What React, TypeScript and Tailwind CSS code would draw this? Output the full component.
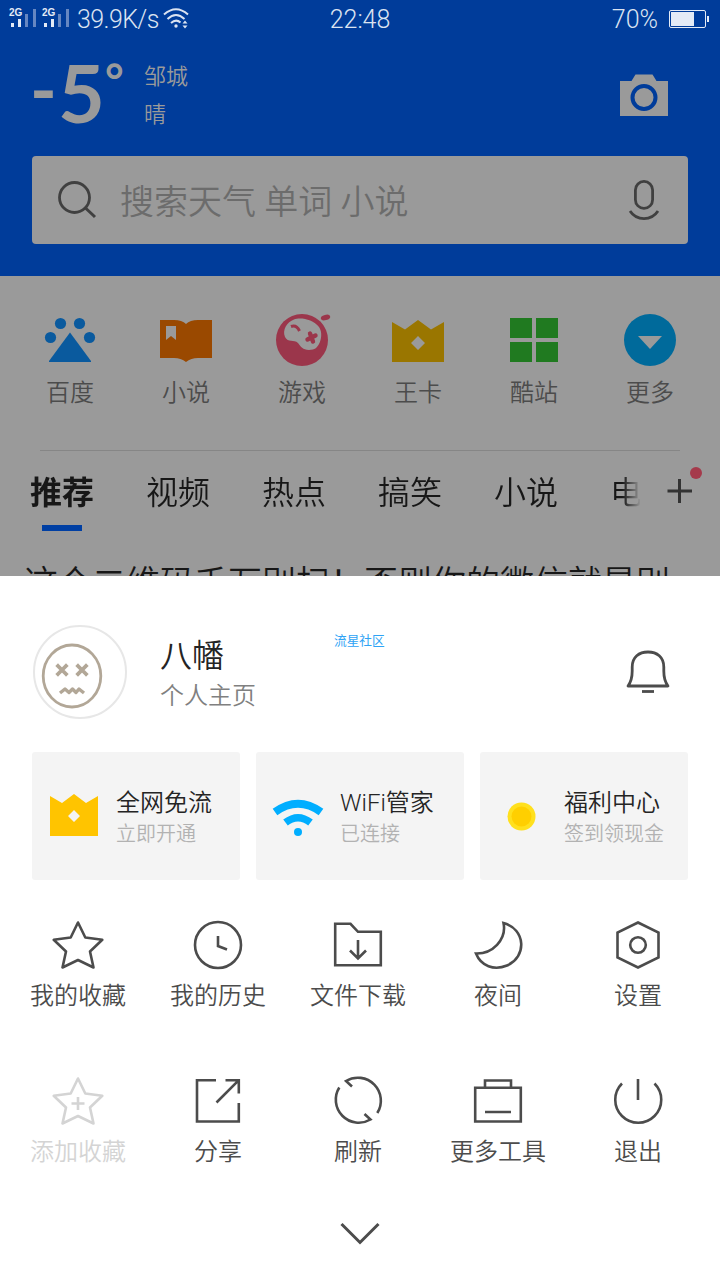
import type { ReactNode } from "react";

const tabs = ["视频", "热点", "搞笑", "小说"];

const STAR = "M24 1.5 L31.3 16.5 L48.3 18.8 L36 30.5 L39.5 46.5 L24 39 L8.5 46.5 L12 30.5 L-0.3 18.8 L16.7 16.5 Z";

function Icon({
  children,
  className = "",
  size = 52,
}: {
  children: ReactNode;
  className?: string;
  size?: number;
}) {
  return (
    <svg
      className={`block shrink-0 ${className}`}
      width={size}
      height={size}
      viewBox={`0 0 ${size} ${size}`}
      fill="none"
    >
      {children}
    </svg>
  );
}

function Signal() {
  return (
    <svg className="block shrink-0 overflow-visible" width="28" height="20" viewBox="0 0 28 20">
      <text x="0" y="7" fontSize="10" fontWeight="700" fontFamily="Liberation Sans, sans-serif" fill="#e4ebf6">
        2G
      </text>
      <path d="M2 14h3v4H2zM9 10h3v8H9z" fill="#e4ebf6" />
      <path d="M16 5h3v13h-3zM24 0h3v18h-3z" fill="#6687c2" />
    </svg>
  );
}

function StatusBar() {
  return (
    <div className="grid h-[38px] grid-cols-3 items-center text-[25px] font-light leading-none text-[#dbe3f1]">
      <div className="flex items-center pl-[9px]">
        <Signal />
        <span className="w-[5px]" />
        <Signal />
        <span className="ml-[7px] w-[85px] whitespace-nowrap tracking-[-0.6px]">39.9K/s</span>
        <svg className="block shrink-0" width="28" height="22" viewBox="0 0 28 22" fill="none" stroke="#dbe3f1" strokeWidth="2">
          <path d="M2 6.5 Q14 -4 26 6.5M5.5 11 Q14 3 22.5 11M9 15 Q14 10.5 18.5 14.5" />
          <circle cx="14" cy="18" r="1.7" fill="#dbe3f1" stroke="none" />
          <path d="M20.5 15.5 L23 12.5 L25.5 15.5 ZM20.5 17.5 L23 20.5 L25.5 17.5 Z" fill="#dbe3f1" stroke="none" />
        </svg>
      </div>
      <span className="text-center">22:48</span>
      <div className="flex items-center justify-end pr-[11px]">
        <span>70%</span>
        <svg className="ml-[11px] block" width="40" height="18" viewBox="0 0 40 18">
          <rect x="0.5" y="0.5" width="36" height="17" rx="1.5" fill="none" stroke="#e4ebf6" />
          <path d="M2 2h23v14H2zM38 6h2v6h-2z" fill="#e4ebf6" />
        </svg>
      </div>
    </div>
  );
}

function Weather() {
  return (
    <div className="flex h-[118px] justify-between pl-[30px] pr-[52px] text-[#9a9a9a]">
      <div className="flex">
        <div className="flex w-[114px] items-start pt-[13px] font-['Lato',sans-serif] text-[81px] font-bold leading-[82px]">
          <span className="w-[28px] text-[72px] leading-[74px]">-</span>
          <span className="w-[47px]">5</span>
          <span className="text-[45px] leading-[58px]">°</span>
        </div>
        <div className="pt-[20px] text-[22px] leading-[38px]">
          <p>邹城</p>
          <p>晴</p>
        </div>
      </div>
      <svg className="mt-[36px] block" width="48" height="42" viewBox="0 0 48 42">
        <path d="M0 7H11.5L15.5 0.5H32.5L36.5 7H48V42H0Z" fill="#9a9a9a" />
        <circle cx="24" cy="23.5" r="11.5" fill="none" stroke="#003c9a" strokeWidth="4" />
      </svg>
    </div>
  );
}

function SearchBar() {
  return (
    <div className="mx-[32px] flex h-[88px] items-center rounded-[4px] bg-[#9a9a9a]">
      <Icon size={40} className="ml-[25px]">
        <circle cx="17.5" cy="17.5" r="15" stroke="#404040" strokeWidth="2.8" />
        <path d="M28.5 28 L38 37" stroke="#404040" strokeWidth="3" />
      </Icon>
      <span className="ml-[23px] flex-1 pt-[3px] text-[34px] leading-[48px] text-[#6c6c6c]">搜索天气 单词 小说</span>
      <svg className="mr-[28px] block" width="32" height="42" viewBox="0 0 32 42" fill="none" stroke="#404040" strokeWidth="2.8">
        <rect x="7.4" y="2.4" width="17.2" height="27" rx="8.6" />
        <path d="M2 32 Q7 39.6 16 39.6 T30 32" />
      </svg>
    </div>
  );
}

const shortcuts: { label: string; icon: ReactNode }[] = [
  {
    label: "百度",
    icon: (
      <g fill="#0a5a9e">
        <circle cx="16.5" cy="9.5" r="5.6" />
        <circle cx="35.5" cy="9.5" r="5.6" />
        <circle cx="6.5" cy="23.5" r="5.6" />
        <circle cx="45.5" cy="23.5" r="5.6" />
        <path d="M26 18.5 L47 47 V48 H5 V47 Z" />
      </g>
    ),
  },
  {
    label: "小说",
    icon: (
      <>
        <path d="M0 6H14Q22 6 26 10Q30 6 38 6H52V44H38Q31 44 26 48Q21 44 14 44H0Z" fill="#9a4900" />
        <path d="M6 12H16V26L11 22L6 26Z" fill="#9a9a9a" />
      </>
    ),
  },
  {
    label: "游戏",
    icon: (
      <>
        <circle cx="26" cy="26" r="26" fill="#9b364b" />
        <path
          d="M18 5.5C24 3 37 5 43 13C48 20 44 34 37 35.5C28 37.5 25 33 22 29C18 25 12 29 9 23C6 16 11 8 18 5.5Z"
          fill="#9a9a9a"
        />
        <path d="M15 12.5Q20.5 10.5 23.5 17" stroke="#9b364b" strokeWidth="3" />
        <path d="M34 19.5L37 27.5M31.5 25.5L39.5 21.5" stroke="#9b364b" strokeWidth="4.4" strokeLinecap="round" />
        <ellipse cx="49.5" cy="3.5" rx="4.8" ry="2.7" fill="#9b364b" transform="rotate(-15 49.5 3.5)" />
      </>
    ),
  },
  {
    label: "王卡",
    icon: (
      <path fillRule="evenodd" fill="#9a7600" d="M0 8L13 15.5L26 6L39 15.5L52 8V48H0ZM26 22L19 29L26 36L33 29Z" />
    ),
  },
  {
    label: "酷站",
    icon: <path d="M2 4h22v20H2zM28 4h22v20H28zM2 28h22v20H2zM28 28h22v20H28z" fill="#207a20" />,
  },
  {
    label: "更多",
    icon: (
      <>
        <circle cx="26" cy="26" r="26" fill="#006a9b" />
        <path d="M14 22H38L26 35Z" fill="#9a9a9a" />
      </>
    ),
  },
];

function Shortcuts() {
  return (
    <div className="flex h-[174px] justify-between px-[12px] pt-[38px]">
      {shortcuts.map((item) => (
        <div key={item.label} className="flex w-[116px] flex-col items-center">
          <Icon className="overflow-visible">{item.icon}</Icon>
          <span className="mt-[10px] text-[24px] leading-[34px] text-[#4c4c4c]">{item.label}</span>
        </div>
      ))}
    </div>
  );
}

function Channels() {
  return (
    <>
      <div className="mx-[40px] h-px bg-[#868686]" />
      <div className="flex h-[80px] pl-[30px] text-[32px] leading-[48px] text-[#171717]">
        <div className="flex w-[610px] gap-[52px] overflow-hidden whitespace-nowrap pt-[18px] [mask-image:linear-gradient(to_right,black_592px,transparent_611px)]">
          <div className="flex w-[64px] shrink-0 flex-col items-center font-bold">
            <span>推荐</span>
            <span className="mt-[8px] h-[6px] w-[40px] bg-[#003fa3]" />
          </div>
          {tabs.map((tab) => (
            <span key={tab} className="w-[64px] shrink-0">
              {tab}
            </span>
          ))}
          <span>电</span>
        </div>
        <svg className="ml-[26px] mt-[14px] block" width="38" height="40" viewBox="0 0 38 40">
          <path d="M1.5 26H26M13.5 14V38" stroke="#333" strokeWidth="3" />
          <circle cx="30" cy="8" r="6" fill="#a53a4b" />
        </svg>
      </div>
      <p className="h-[45px] overflow-hidden whitespace-nowrap pl-[24px] pt-[28px] text-[34px] leading-[48px] text-[#171717]">
        这个二维码千万别扫！否则你的微信就是别
      </p>
    </>
  );
}

function Profile() {
  return (
    <div className="flex h-[176px] pl-[32px] pr-[50px] pt-[48px]">
      <svg className="block shrink-0" width="96" height="96" viewBox="0 0 96 96" fill="none">
        <circle cx="48" cy="48" r="46" stroke="#e7e7e7" strokeWidth="2" />
        <g stroke="#b2a797">
          <ellipse cx="40" cy="52" rx="28.8" ry="31" strokeWidth="2.8" />
          <path d="M26 42L34 50M34 42L26 50M46 42L54 50M54 42L46 50" strokeWidth="3.8" strokeLinecap="square" />
          <path d="M28 69L33 65L37 68.5L40.5 65L44 68.5L47 65L52 69" strokeWidth="3.4" strokeLinejoin="round" />
        </g>
      </svg>
      <div className="ml-[32px] w-[174px] pt-[9px]">
        <p className="text-[32px] leading-[46px] text-[#242424]">八幡</p>
        <p className="text-[24px] leading-[34px] text-[#808080]">个人主页</p>
      </div>
      <span className="pt-[8px] text-[12.7px] font-normal leading-[18px] text-[#2ea3f5]">流星社区</span>
      <svg className="ml-auto mt-[25px] block" width="44" height="46" viewBox="0 0 44 46" fill="none" stroke="#4c4c4c" strokeWidth="2.8">
        <path d="M2 37C5 33 6.2 28 6.2 22V18C6.2 8 13 3 22 3S37.8 8 37.8 18V22C37.8 28 39 33 42 37Z" strokeLinejoin="round" />
        <path d="M16 42.5H28" />
      </svg>
    </div>
  );
}

const cards: { title: string; note: string; icon: ReactNode }[] = [
  {
    title: "全网免流",
    note: "立即开通",
    icon: (
      <path fillRule="evenodd" fill="#ffc400" d="M2 8L14 15L26 6L38 15L50 8V48H2ZM26 22L20 28L26 34L32 28Z" />
    ),
  },
  {
    title: "WiFi管家",
    note: "已连接",
    icon: (
      <>
        <path d="M3 24Q26 7.5 49 24" stroke="#00aeff" strokeWidth="8" />
        <path d="M13.5 34.5Q26 25 38.5 34.5" stroke="#00aeff" strokeWidth="7.5" />
        <circle cx="26" cy="44" r="4" fill="#00aeff" />
      </>
    ),
  },
  {
    title: "福利中心",
    note: "签到领现金",
    icon: (
      <>
        <circle cx="25.5" cy="28.5" r="14" fill="#ffe01d" />
        <circle cx="25.5" cy="28.5" r="10" fill="#ffcf00" />
      </>
    ),
  },
];

function Cards() {
  return (
    <div className="grid grid-cols-3 gap-4 px-8">
      {cards.map((card) => (
        <div key={card.title} className="flex h-32 rounded-[3px] bg-[#f4f4f4] pl-4">
          <Icon className="mt-[36px]">{card.icon}</Icon>
          <div className="ml-[16px] whitespace-nowrap pt-[34px]">
            <p className="text-[24px] leading-[34px] text-[#242424]">{card.title}</p>
            <p className="text-[20px] leading-[28px] text-[#b2b2b2]">{card.note}</p>
          </div>
        </div>
      ))}
    </div>
  );
}

const actions: { label: string; icon: ReactNode; disabled?: boolean }[] = [
  { label: "我的收藏", icon: <path d={STAR} strokeLinejoin="round" /> },
  {
    label: "我的历史",
    icon: (
      <>
        <circle cx="24" cy="24" r="23" />
        <path d="M24 15V25L33 28.5" />
      </>
    ),
  },
  {
    label: "文件下载",
    icon: (
      <>
        <path d="M1.2 2.8H16.5L24 10.8H46.8V44.3H1.2Z" />
        <path d="M24 19V37M16 29.5L24 37.5L32 29.5" />
      </>
    ),
  },
  { label: "夜间", icon: <path d="M29.5 2C52 8 53 36 33 44.5C20 50 7 45 2 32.5C18 33 33 19 29.5 2Z" /> },
  {
    label: "设置",
    icon: (
      <>
        <path d="M24 1.5L44.5 11.5V36.5L24 46.5L3.5 36.5V11.5Z" />
        <circle cx="24" cy="24" r="7.8" />
      </>
    ),
  },
  {
    label: "添加收藏",
    disabled: true,
    icon: (
      <>
        <path d={STAR} strokeLinejoin="round" />
        <path d="M24 20V33M17.5 26.5H30.5" />
      </>
    ),
  },
  {
    label: "分享",
    icon: <path d="M22 3.2H3V44.5H44.8V26M31.5 3.2H44.8V16.5M44.8 3.2L22.5 25.5" />,
  },
  {
    label: "刷新",
    icon: (
      <>
        <path d="M18 9.5L12 4A23 23 0 0 1 43.3 36" />
        <path d="M30.5 37L36.5 42.5A23 23 0 0 1 5.3 10.5" />
      </>
    ),
  },
  {
    label: "更多工具",
    icon: <path d="M1.2 10.8H46.8V44.5H1.2ZM11 10.8V3.5H37V10.8M11 35H37" />,
  },
  {
    label: "退出",
    icon: <path d="M8 6.5A23 23 0 1 0 40.5 6.5M24 2V23" />,
  },
];

function Actions() {
  return (
    <div className="grid grid-cols-5 gap-y-[64px] pl-[8px] pr-[12px] pt-[41px]">
      {actions.map((action) => (
        <div
          key={action.label}
          className={`flex flex-col items-center ${action.disabled ? "text-[#d4d4d4]" : "text-[#4c4c4c]"}`}
        >
          <svg
            className="block overflow-visible"
            width="48"
            height="48"
            viewBox="0 0 48 48"
            fill="none"
            stroke="currentColor"
            strokeWidth="2.6"
          >
            {action.icon}
          </svg>
          <span className="mt-[10px] text-[24px] leading-[34px]">{action.label}</span>
        </div>
      ))}
    </div>
  );
}

export default function App() {
  return (
    <div className="h-[1280px] w-[720px] overflow-hidden bg-white font-['Roboto','Noto_Sans_CJK_SC',sans-serif] font-[350]">
      <div className="h-[576px] overflow-hidden bg-[#9a9a9a]">
        <header className="h-[276px] bg-[#003c9a]">
          <StatusBar />
          <Weather />
          <SearchBar />
        </header>
        <Shortcuts />
        <Channels />
      </div>
      <div className="h-[704px]">
        <Profile />
        <Cards />
        <Actions />
        <svg className="mx-auto mt-[52px] block" width="42" height="26" viewBox="0 0 42 26" fill="none">
          <path d="M2.5 3L21 21.5L39.5 3" stroke="#4c4c4c" strokeWidth="3" />
        </svg>
      </div>
    </div>
  );
}
